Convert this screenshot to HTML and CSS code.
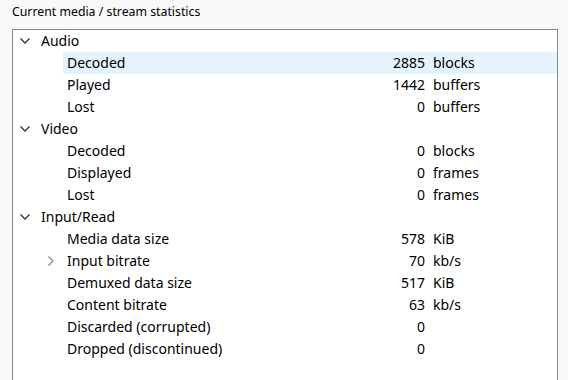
FILE: index.html
```html
<!DOCTYPE html>
<html lang="en">
<head>
  <meta charset="UTF-8">
  <title>Statistics</title>
  <link rel="stylesheet" href="styles.css">
</head>
<body>
  <div class="page">
    <div class="caption">Current media / stream statistics</div>
    <div class="tree">
      <div class="row top"><span class="arrow open"><svg width="10" height="6" viewBox="0 0 10 6"><path d="M0.5 0.5 L5 5 L9.5 0.5" /></svg></span><div class="cell"><span class="name">Audio</span></div></div>
      <div class="row child"><span class="arrow"></span><div class="cell selected"><span class="name">Decoded</span><span class="value">2885</span><span class="unit">blocks</span></div></div>
      <div class="row child"><span class="arrow"></span><div class="cell"><span class="name">Played</span><span class="value">1442</span><span class="unit">buffers</span></div></div>
      <div class="row child"><span class="arrow"></span><div class="cell"><span class="name">Lost</span><span class="value">0</span><span class="unit">buffers</span></div></div>

      <div class="row top"><span class="arrow open"><svg width="10" height="6" viewBox="0 0 10 6"><path d="M0.5 0.5 L5 5 L9.5 0.5" /></svg></span><div class="cell"><span class="name">Video</span></div></div>
      <div class="row child"><span class="arrow"></span><div class="cell"><span class="name">Decoded</span><span class="value">0</span><span class="unit">blocks</span></div></div>
      <div class="row child"><span class="arrow"></span><div class="cell"><span class="name">Displayed</span><span class="value">0</span><span class="unit">frames</span></div></div>
      <div class="row child"><span class="arrow"></span><div class="cell"><span class="name">Lost</span><span class="value">0</span><span class="unit">frames</span></div></div>

      <div class="row top"><span class="arrow open"><svg width="10" height="6" viewBox="0 0 10 6"><path d="M0.5 0.5 L5 5 L9.5 0.5" /></svg></span><div class="cell"><span class="name">Input/Read</span></div></div>
      <div class="row child"><span class="arrow"></span><div class="cell"><span class="name">Media data size</span><span class="value">578</span><span class="unit">KiB</span></div></div>
      <div class="row child"><span class="arrow closed"><svg width="6" height="10" viewBox="0 0 6 10"><path d="M0.5 0.5 L5 5 L0.5 9.5" /></svg></span><div class="cell"><span class="name">Input bitrate</span><span class="value">70</span><span class="unit">kb/s</span></div></div>
      <div class="row child"><span class="arrow"></span><div class="cell"><span class="name">Demuxed data size</span><span class="value">517</span><span class="unit">KiB</span></div></div>
      <div class="row child"><span class="arrow"></span><div class="cell"><span class="name">Content bitrate</span><span class="value">63</span><span class="unit">kb/s</span></div></div>
      <div class="row child"><span class="arrow"></span><div class="cell"><span class="name">Discarded (corrupted)</span><span class="value">0</span><span class="unit"></span></div></div>
      <div class="row child"><span class="arrow"></span><div class="cell"><span class="name">Dropped (discontinued)</span><span class="value">0</span><span class="unit"></span></div></div>
    </div>
  </div>
</body>
</html>
```

FILE: styles.css
```css
body {
  margin: 0;
  background: #f9f9f9;
  font-family: "Segoe UI", "Noto Sans", sans-serif;
  color: #000;
}

.page {
  padding: 4px 10px 0 12px;
  height: 376px;
  overflow: hidden;
}

.caption {
  font-size: 12.3px;
  line-height: 16px;
  height: 25px;
}

.tree {
  background: #fff;
  border: 1px solid #828790;
  border-bottom: none;
  height: 400px;
  font-size: 14px;
}

.row {
  display: flex;
  height: 22px;
  line-height: 22px;
}

.arrow {
  width: 24px;
  flex: none;
  display: flex;
  align-items: center;
  justify-content: center;
}

.arrow svg {
  fill: none;
  stroke-width: 1.3;
}

.arrow.open svg {
  stroke: #333;
}

.arrow.closed svg {
  stroke: #8a8a8a;
}

.row.child .arrow {
  margin-left: 26px;
}

.cell {
  flex: 1;
  display: flex;
  padding-left: 4px;
}

.cell.selected {
  background: #e5f3ff;
}

.name {
  flex: 1;
  white-space: nowrap;
}

.value {
  width: 120px;
  text-align: right;
}

.unit {
  width: 132px;
  padding-left: 8px;
  box-sizing: border-box;
}
```
